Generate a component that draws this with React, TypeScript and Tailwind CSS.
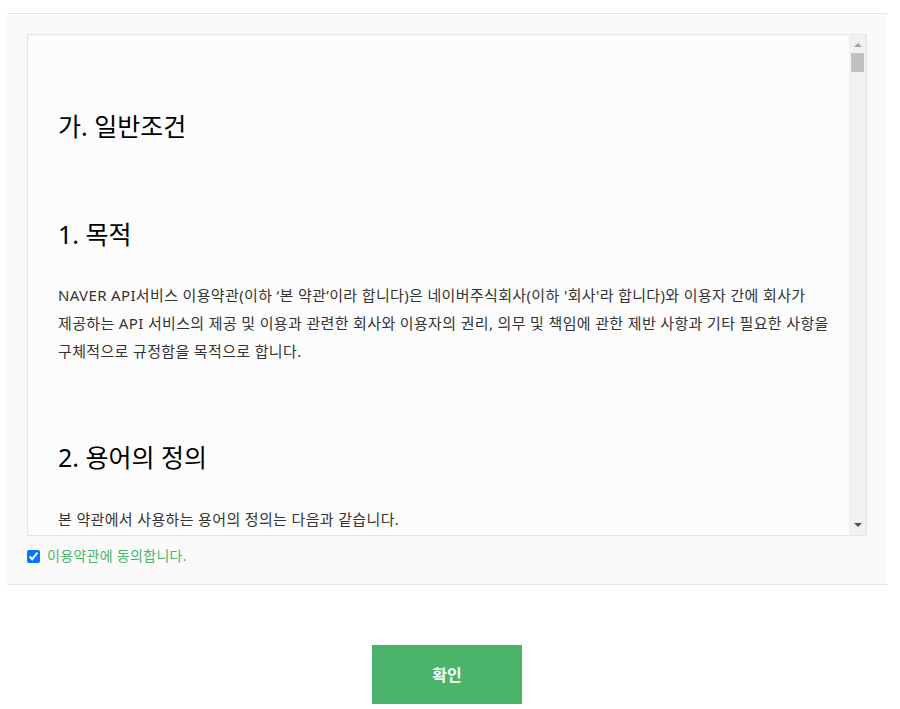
import React from 'react'

const purposeLines = [
  'NAVER API서비스 이용약관(이하 ‘본 약관’이라 합니다)은 네이버주식회사(이하 \'회사\'라 합니다)와 이용자 간에 회사가',
  '제공하는 API 서비스의 제공 및 이용과 관련한 회사와 이용자의 권리, 의무 및 책임에 관한 제반 사항과 기타 필요한 사항을',
  '구체적으로 규정함을 목적으로 합니다.',
]

function ScrollBar() {
  return (
    <div className="flex w-[17px] shrink-0 flex-col items-center bg-[#f1f1f1]">
      <div className="mt-[8px] h-0 w-0 border-x-[4px] border-b-[4px] border-x-transparent border-b-[#a3a3a3]" />
      <div className="mt-[6px] h-[19px] w-[13px] bg-[#c1c1c1]" />
      <div className="flex-1" />
      <div className="mb-[8px] h-0 w-0 border-x-[4px] border-t-[4px] border-x-transparent border-t-[#505050]" />
    </div>
  )
}

export default function App() {
  return (
    <div className="min-h-screen bg-white pt-[13px] font-['Noto_Sans','Noto_Sans_CJK_KR',sans-serif]">
      <div className="ml-[7px] w-[880px]">
        <div className="border-y border-[#e5e5e5] bg-[#fafafa] px-5 pt-5 pb-[18px]">
          <div className="flex h-[502px] border border-[#e5e5e5] bg-[#fcfcfc]">
            <div className="flex-1 overflow-hidden px-[30px]">
              <h2 className="mt-[73px] text-[25px] leading-9 text-black">가. 일반조건</h2>

              <h3 className="mt-[72px] text-[25px] leading-9 text-black">1. 목적</h3>
              <p className="mt-[29px] text-[15px] leading-7 tracking-[0.35px] text-[#333]">
                {purposeLines.map((line) => (
                  <span key={line} className="block whitespace-nowrap">
                    {line}
                  </span>
                ))}
              </p>

              <h3 className="mt-[74px] text-[25px] leading-9 text-black">2. 용어의 정의</h3>
              <p className="mt-[30px] text-[15px] leading-7 tracking-[0.35px] text-[#333]">
                본 약관에서 사용하는 용어의 정의는 다음과 같습니다.
              </p>
            </div>
            <ScrollBar />
          </div>

          <label className="mt-[10px] flex items-center gap-[7px] text-[14px] leading-5 tracking-[0.3px] text-[#4ab46a]">
            <input type="checkbox" defaultChecked className="m-0 h-[13px] w-[13px]" />
            이용약관에 동의합니다.
          </label>
        </div>

        <div className="mt-[60px] flex justify-center">
          <button className="h-[59px] w-[150px] bg-[#4ab46a] text-[16px] font-bold text-white">확인</button>
        </div>
      </div>
    </div>
  )
}
